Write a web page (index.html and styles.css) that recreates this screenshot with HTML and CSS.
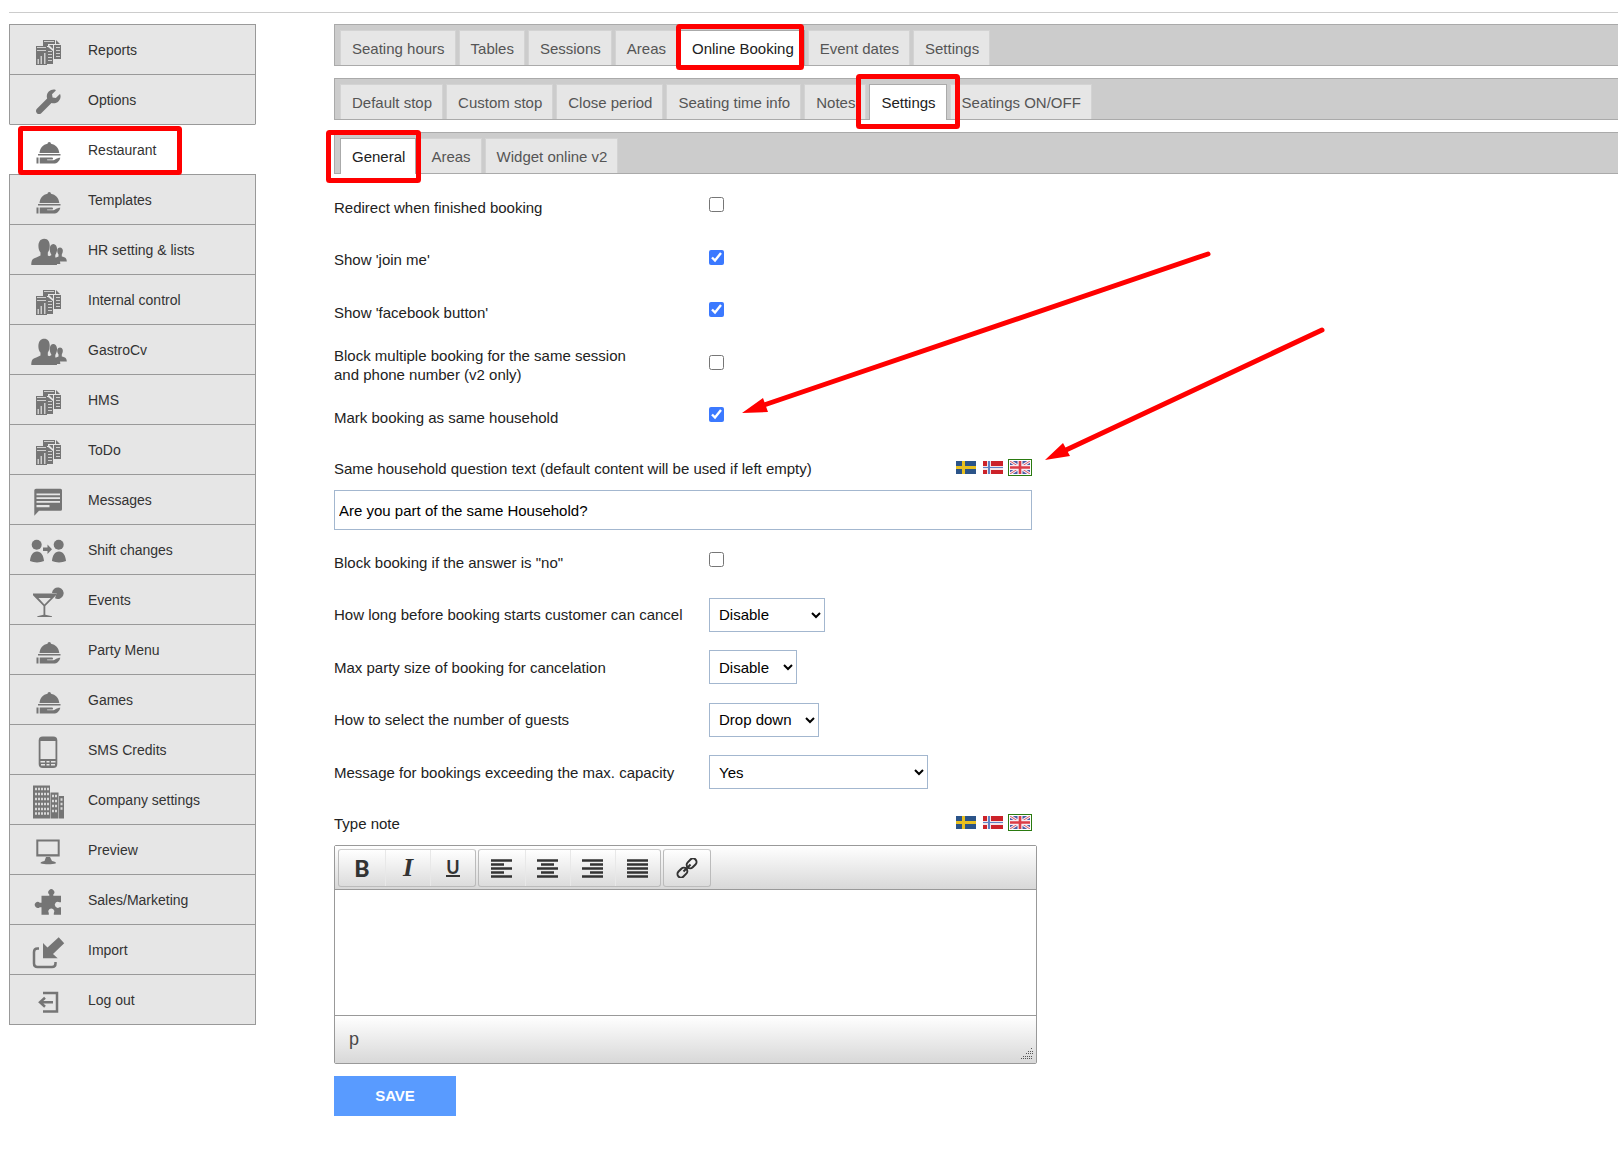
FILE: index.html
```
<!DOCTYPE html>
<html lang="en">
<head>
    <meta charset="utf-8">
    <title>Online Booking - Settings</title>
    <link rel="stylesheet" href="styles.css">
</head>
<body>
    <svg class="sprite" aria-hidden="true">
        <symbol id="i-reports" viewBox="0 0 40 41">
            <path d="M15 10h12v4h-7v2h-5z"/>
            <path class="cut soft" d="M16 11h10v1H16z"/>
            <path d="M28 10l4 4h-4zM26 15h7v14h-7z"/>
            <path class="cut soft" d="M28 17h4v1h-4zM28 20h4v1h-4zM28 23h4v1h-4zM28 26h4v1h-4z"/>
            <path d="M19 17h1l5 4v13h-6z"/>
            <path d="M21 15l4 4v-4z"/>
            <path class="cut soft" d="M20 21h4v1h-4zM20 24h4v1h-4zM20 27h4v1h-4zM20 30h4v1h-4z"/>
            <path d="M8 16h11v19H8z"/>
            <path class="cut soft" d="M9 17h9v1H9zM9 20h9v1H9zM9.500 29h1.500v5H9.500zM12.500 26h1.500v8h-1.500zM16 23h1.500v11H16z"/>
        </symbol>
        <symbol id="i-options" viewBox="0 0 40 41">
            <path transform="translate(8 9.500) scale(.048)" d="M507.730 109.100c-2.240-9.030-13.540-12.090-20.120-5.510l-74.360 74.360-67.880-11.310-11.310-67.880 74.360-74.360c6.620-6.620 3.430-17.900-5.660-20.160-47.380-11.740-99.550.910-136.580 37.930-39.640 39.640-50.550 97.100-34.050 147.200L18.740 402.760c-25 25-25 65.500 0 90.500s65.500 25 90.500 0l213.210-213.210c50.120 16.710 107.470 5.680 147.370-34.220 37.070-37.070 49.700-89.320 37.910-136.730z"/>
        </symbol>
        <symbol id="i-dish" viewBox="0 0 40 41">
            <path d="M11.500 23c.5-5 3.500-8.500 8-9.300a1.600 1.600 0 0 1 3.500 0c4.500.8 7.800 4.300 8.300 9.300zM10 24h22.500v1.500H10zM8.500 27.500h2v6h-2zM11.700 27.500H24c1 0 1.500 1.500.5 2h-5.500l.3.800h5c3 0 4-2.600 8-2.600-.8 3.500-3.300 5.800-6.500 5.800H11.700z"/>
        </symbol>
        <symbol id="i-people" viewBox="0 0 40 41">
            <path d="M27 31.500V28l3.500-1.500v-2c-2.500-4-1-7 1.500-7s4 3 1.800 7v2c3.500.8 5 1.800 5 5z"/>
            <path d="M20 34v-7l3.500-2c-3-5-2-11 1.800-11s5.200 6 2 11v2.500c3.500 1 5 2.500 5 6.500z"/>
            <path d="M3.300 35c0-5 1.200-6.300 5-7.500l4.200-2v-3c-3-3-3.500-13.800 3.700-13.800s6.200 10.800 3.600 13.800v3l4.200 2c4 1.200 5 2.500 5 7.500z"/>
        </symbol>
        <symbol id="i-message" viewBox="0 0 40 41">
            <path d="M8 8.700h24.500q1.500 0 1.500 1.500v19q0 1.500-1.500 1.500H11l-4.700 5V10.200q0-1.500 1.700-1.500z"/>
            <path class="cut" d="M8.500 13.500H32v1.700H8.500zM8.500 17.200H32v1.700H8.500zM8.500 21H32v1.700H8.500zM8.500 25h13v2.200h-13z"/>
        </symbol>
        <symbol id="i-shift" viewBox="0 0 40 41">
            <circle cx="8.700" cy="14.700" r="5"/>
            <circle cx="30.700" cy="14.700" r="5"/>
            <path d="M2 31c.5-5.500 2.800-9.500 7-9.500s6.500 4 7 9.500c-4 1.900-10 1.900-14 0zM24 31c.5-5.500 2.800-9.500 7-9.500s6.500 4 7 9.500c-4 1.900-10 1.900-14 0zM15 17.500h4.500v-3l4.500 4.800-4.500 4.700v-3H15z"/>
        </symbol>
        <symbol id="i-events" viewBox="0 0 40 41">
            <path d="M24 13a5.800 5.800 0 1 1 3 5.300l1.500-5z"/>
            <path d="M5 13.500h23v1.800L17.300 26v8.800l6.700 1.400V37H9.300v-.8l6.200-1.400V26L5 15.300z"/>
            <path class="cut" d="M10.500 18h12.300l-6.400 6.500z"/>
        </symbol>
        <symbol id="i-phone" viewBox="0 0 40 41">
            <rect x="10.700" y="6.500" width="18.600" height="31.500" rx="4"/>
            <path class="cut" d="M12.500 11h15v18h-15zM12.500 31H17v1.500h-4.500zM18.500 31h3v1.500h-3zM23 31h4.500v1.500H23zM13 34h4v1.500h-4zM18.500 34h3v1.500h-3zM23 34h4v1.500h-4z"/>
        </symbol>
        <symbol id="i-company" viewBox="0 0 40 41">
            <path d="M5 5.500h17v33H5zM22.500 12.500h8v26h-8zM31 16h5v22.500h-5z"/>
            <path class="dots" d="M7 9h14M7 14h14M7 19h14M7 24h14M7 29h14M7 33.500h14M24 16h5M24 21h5M24 26h5M24 31h5M32.500 19.500h2M32.500 24h2M32.500 28.500h2"/>
        </symbol>
        <symbol id="i-preview" viewBox="0 0 40 41">
            <path d="M8.300 9.500h23.400V26.500H8.300zM18 27h4l2 4c3 .6 4 1.200 4 2.200-4 1.400-11.500 1.400-15.500 0 0-1 1-1.600 4-2.200z"/>
            <path class="cut" d="M10.300 11.500h19.400v12.700H10.300z"/>
        </symbol>
        <symbol id="i-puzzle" viewBox="0 0 40 41">
            <path d="M13.500 15.700h7.800v-1.200a3 3 0 1 1 4 0v1.200H33v6.600h-1.500a3 3 0 1 0 0 5H33v7.400h-7.200v-1.500a3 3 0 1 0-5 0v1.500h-7.300v-7.500h-1.700a3 3 0 1 1 0-4.500h1.700z"/>
        </symbol>
        <symbol id="i-import" viewBox="0 0 40 41">
            <path d="M15 13l4.500 4.500L30.700 7.300l5.500 6L25 24l4.700 4.300H15z"/>
            <path class="line" d="M11 18.500H9.500q-3.500 0-3.500 3.500v11.500q0 3.500 3.500 3.500H24q3.500 0 3.500-3.500V32"/>
        </symbol>
        <symbol id="i-logout" viewBox="0 0 40 41">
            <path class="line" d="M15 13h14v18.500H15M25 22.300H12M17 17.800l-5 4.500 5 4.500"/>
        </symbol>
        <symbol id="flag-se" viewBox="0 0 20 13">
            <path fill="#2b5488" d="M0 0h20v13H0z"/>
            <path fill="#e8c020" d="M6 0h3v13H6zM0 5h20v3H0z"/>
        </symbol>
        <symbol id="flag-no" viewBox="0 0 20 13">
            <path fill="#cc2229" d="M0 0h20v13H0z"/>
            <path fill="#f3e6ea" d="M4 0h4v13H4zM0 5h20v4H0z"/>
            <path fill="#5f83c4" d="M5 0h2v13H5zM0 6h20v1H0z"/>
        </symbol>
        <symbol id="flag-gb" viewBox="0 0 20 13">
            <path fill="#4a5ca5" d="M0 0h20v13H0z"/>
            <path stroke="#f4eef4" stroke-width="3" d="M0 0l20 13M20 0L0 13"/>
            <path stroke="#dc5a66" stroke-width="1" d="M0 0l20 13M20 0L0 13"/>
            <path fill="#f4eef4" d="M7.500 0h5v13h-5zM0 4h20v5H0z"/>
            <path fill="#dc3c46" d="M8.700 0h2.600v13H8.700zM0 5.300h20v2.400H0z"/>
        </symbol>
    </svg>

    <div class="page">
        <nav class="sidebar">
            <a href="#"><svg><use href="#i-reports"/></svg>Reports</a>
            <a href="#"><svg><use href="#i-options"/></svg>Options</a>
            <a href="#" class="current"><svg><use href="#i-dish"/></svg>Restaurant</a>
            <a href="#"><svg><use href="#i-dish"/></svg>Templates</a>
            <a href="#"><svg><use href="#i-people"/></svg>HR setting &amp; lists</a>
            <a href="#"><svg><use href="#i-reports"/></svg>Internal control</a>
            <a href="#"><svg><use href="#i-people"/></svg>GastroCv</a>
            <a href="#"><svg><use href="#i-reports"/></svg>HMS</a>
            <a href="#"><svg><use href="#i-reports"/></svg>ToDo</a>
            <a href="#"><svg><use href="#i-message"/></svg>Messages</a>
            <a href="#"><svg><use href="#i-shift"/></svg>Shift changes</a>
            <a href="#"><svg><use href="#i-events"/></svg>Events</a>
            <a href="#"><svg><use href="#i-dish"/></svg>Party Menu</a>
            <a href="#"><svg><use href="#i-dish"/></svg>Games</a>
            <a href="#"><svg><use href="#i-phone"/></svg>SMS Credits</a>
            <a href="#"><svg><use href="#i-company"/></svg>Company settings</a>
            <a href="#"><svg><use href="#i-preview"/></svg>Preview</a>
            <a href="#"><svg><use href="#i-puzzle"/></svg>Sales/Marketing</a>
            <a href="#"><svg><use href="#i-import"/></svg>Import</a>
            <a href="#"><svg><use href="#i-logout"/></svg>Log out</a>
        </nav>

        <main class="main">
            <div class="tab-bars">
                <nav class="tabs">
                    <a href="#">Seating hours</a>
                    <a href="#">Tables</a>
                    <a href="#">Sessions</a>
                    <a href="#">Areas</a>
                    <a href="#" class="active">Online Booking</a>
                    <a href="#">Event dates</a>
                    <a href="#">Settings</a>
                </nav>
                <nav class="tabs">
                    <a href="#">Default stop</a>
                    <a href="#">Custom stop</a>
                    <a href="#">Close period</a>
                    <a href="#">Seating time info</a>
                    <a href="#">Notes</a>
                    <a href="#" class="active">Settings</a>
                    <a href="#">Seatings ON/OFF</a>
                </nav>
                <nav class="tabs">
                    <a href="#" class="active">General</a>
                    <a href="#">Areas</a>
                    <a href="#">Widget online v2</a>
                </nav>
            </div>

            <form class="settings">
                <div class="rows">
                    <div class="row">
                        <label for="redirect">Redirect when finished booking</label>
                        <input type="checkbox" id="redirect">
                    </div>
                    <div class="row">
                        <label for="join">Show 'join me'</label>
                        <input type="checkbox" id="join" checked>
                    </div>
                    <div class="row">
                        <label for="facebook">Show 'facebook button'</label>
                        <input type="checkbox" id="facebook" checked>
                    </div>
                    <div class="row">
                        <label for="multiple">Block multiple booking for the same session<br>and phone number (v2 only)</label>
                        <input type="checkbox" id="multiple">
                    </div>
                    <div class="row">
                        <label for="household">Mark booking as same household</label>
                        <input type="checkbox" id="household" checked>
                    </div>
                </div>

                <div class="lang-row">
                    <label for="question">Same household question text (default content will be used if left empty)</label>
                    <div class="flags">
                        <button type="button" aria-label="Swedish"><svg><use href="#flag-se"/></svg></button>
                        <button type="button" aria-label="Norwegian"><svg><use href="#flag-no"/></svg></button>
                        <button type="button" class="selected" aria-label="English"><svg><use href="#flag-gb"/></svg></button>
                    </div>
                </div>
                <input type="text" class="question" id="question" value="Are you part of the same Household?">

                <div class="rows second">
                    <div class="row">
                        <label for="block">Block booking if the answer is "no"</label>
                        <input type="checkbox" id="block">
                    </div>
                    <div class="row">
                        <label for="cancel">How long before booking starts customer can cancel</label>
                        <select id="cancel" class="w-time"><option>Disable</option></select>
                    </div>
                    <div class="row">
                        <label for="party">Max party size of booking for cancelation</label>
                        <select id="party" class="w-size"><option>Disable</option></select>
                    </div>
                    <div class="row">
                        <label for="guests">How to select the number of guests</label>
                        <select id="guests" class="w-guests"><option>Drop down</option></select>
                    </div>
                    <div class="row">
                        <label for="capacity">Message for bookings exceeding the max. capacity</label>
                        <select id="capacity" class="w-message"><option>Yes</option></select>
                    </div>
                </div>

                <div class="lang-row">
                    <label for="note">Type note</label>
                    <div class="flags">
                        <button type="button" aria-label="Swedish"><svg><use href="#flag-se"/></svg></button>
                        <button type="button" aria-label="Norwegian"><svg><use href="#flag-no"/></svg></button>
                        <button type="button" class="selected" aria-label="English"><svg><use href="#flag-gb"/></svg></button>
                    </div>
                </div>
                <div class="editor">
                    <div class="toolbar">
                        <div class="tools">
                            <button type="button" class="bold">B</button>
                            <button type="button" class="italic">I</button>
                            <button type="button" class="underline"><span>U</span></button>
                        </div>
                        <div class="tools">
                            <button type="button" aria-label="Align left"><svg viewBox="0 0 22 19"><path d="M0 1.500h21M0 5.500h13M0 9.500h21M0 13.500h13M0 17.500h21"/></svg></button>
                            <button type="button" aria-label="Center"><svg viewBox="0 0 22 19"><path d="M0 1.500h21M4 5.500h13M0 9.500h21M4 13.500h13M0 17.500h21"/></svg></button>
                            <button type="button" aria-label="Align right"><svg viewBox="0 0 22 19"><path d="M0 1.500h21M8 5.500h13M0 9.500h21M8 13.500h13M0 17.500h21"/></svg></button>
                            <button type="button" aria-label="Justify"><svg viewBox="0 0 22 19"><path d="M0 1.500h21M0 5.500h21M0 9.500h21M0 13.500h21M0 17.500h21"/></svg></button>
                        </div>
                        <div class="tools">
                            <button type="button" aria-label="Link"><svg class="link" viewBox="0 0 22 20"><g transform="rotate(-45 11 10)"><rect x="-1" y="6.500" width="11" height="7" rx="3.500"/><rect x="12" y="6.500" width="11" height="7" rx="3.500"/><path d="M6 10h10"/></g></svg></button>
                        </div>
                    </div>
                    <textarea id="note"></textarea>
                    <div class="status">
                        <span>p</span>
                        <svg viewBox="0 0 13 13"><path d="M11 1.500h2M8 4.500h5M6 6.500h7M3 9.500h10M1 11.500h12"/></svg>
                    </div>
                </div>
                <button type="submit" class="save">SAVE</button>
            </form>
        </main>
    </div>

    <!-- help marks over the page -->
    <svg class="marks" aria-hidden="true">
        <rect x="20.500" y="128.500" width="159" height="44" rx="1"/>
        <rect x="678.500" y="26.500" width="123" height="41" rx="1"/>
        <rect x="858.500" y="76.500" width="99" height="50" rx="1"/>
        <rect x="328.500" y="132.500" width="90" height="48" rx="1"/>
        <path d="M1208 254L764 405M1322 330L1066 450"/>
        <path class="head" d="M742 413l21-15 5 14zM1045 460l18-17 7 13z"/>
    </svg>
</body>
</html>
```
FILE: styles.css
```
* {
    box-sizing: border-box;
}
body {
    margin: 0;
    background: #fff;
    color: #222;
    font-family: "Liberation Sans", Arial, sans-serif;
    font-size: 15px;
}
a {
    text-decoration: none;
}
.sprite {
    display: none;
}
.page {
    display: flex;
    align-items: flex-start;
    gap: 78px;
    margin: 12px 0 0 9px;
    padding-top: 11px;
    border-top: 1px solid #ccc;
}

/* left menu */
.sidebar {
    flex: 0 0 247px;
    border-bottom: 1px solid #999;
}
.sidebar a {
    display: flex;
    align-items: center;
    gap: 20px;
    height: 50px;
    padding-left: 18px;
    border: 1px solid #999;
    border-bottom: 0;
    background: #e6e6e6;
    color: #333;
    font-size: 14px;
}
.sidebar a.current {
    background: #fff;
    border-left-color: #fff;
    border-right-color: #fff;
}
.sidebar svg {
    width: 40px;
    height: 41px;
    margin-top: 2px;
    fill: #757575;
    color: #e6e6e6;
}
.sidebar .current svg {
    color: #fff;
}
.cut {
    fill: currentColor;
}
.soft {
    opacity: .8;
}
.dots {
    fill: none;
    stroke: #d8d8d8;
    stroke-width: 2.5;
    stroke-dasharray: 2 1;
}
.line {
    fill: none;
    stroke: #757575;
    stroke-width: 2.5;
}

/* tabs */
.main {
    flex: 1;
    min-width: 0;
}
.tab-bars {
    display: flex;
    flex-direction: column;
    gap: 12px;
}
.tabs {
    display: flex;
    gap: 3px;
    height: 42px;
    padding: 5px 0 0 5px;
    border: 1px solid #aaa;
    border-right: 0;
    background: #ccc;
}
.tabs a {
    display: flex;
    align-items: center;
    padding: 0 10px 0 11px;
    border: 1px solid #d3d3d3;
    border-bottom: 0;
    background: #e6e6e6;
    color: #555;
    white-space: nowrap;
}
.tabs a.active {
    margin-bottom: -1px;
    padding-bottom: 1px;
    border-color: #aaa;
    background: #fff;
    color: #212121;
}

/* form */
.settings {
    max-width: 703px;
    padding-top: 7px;
}
.row {
    display: flex;
    align-items: center;
    height: 52px;
}
.row:nth-child(even) {
    height: 53px;
}
.row label {
    flex: 0 0 375px;
    line-height: 19px;
}
.rows.second {
    margin-top: 6px;
}
input[type="checkbox"] {
    width: 15px;
    height: 15px;
    margin: 0 0 5px;
    accent-color: #3b79ff;
}
.lang-row {
    display: flex;
    justify-content: space-between;
    align-items: center;
    height: 47px;
    padding-top: 2px;
    margin-right: 5px;
}
.lang-row label {
    padding-top: 2px;
}
.flags {
    display: flex;
    gap: 3px;
}
.flags button {
    display: flex;
    padding: 1px;
    border: 1px solid transparent;
    background: none;
}
.flags button.selected {
    border-color: #2a7a10;
}
.flags svg {
    width: 20px;
    height: 13px;
}
.question {
    display: block;
    width: calc(100% - 5px);
    height: 40px;
    padding: 0 4px;
    border: 1px solid #a3b7cf;
    color: #000;
    font: inherit;
}
select {
    height: 34px;
    padding: 0 1px 0 5px;
    border: 1px solid #a3b7cf;
    border-radius: 0;
    background: #fff;
    color: #000;
    font: inherit;
}
.w-time {
    width: 116px;
}
.w-size {
    width: 88px;
}
.w-guests {
    width: 110px;
}
.w-message {
    width: 219px;
}

/* editor */
.editor {
    border: 1px solid #999;
    border-radius: 2px;
}
.toolbar {
    display: flex;
    gap: 2px;
    height: 44px;
    padding: 3px;
    border-bottom: 1px solid #999;
    background: linear-gradient(#fff, #d8d8d8);
}
.tools {
    display: flex;
    height: 38px;
    border: 1px solid #bbb;
    border-top-color: #ccc;
    border-radius: 3px;
    background: linear-gradient(#fff, #dcdcdc);
}
.tools button {
    display: flex;
    justify-content: center;
    align-items: center;
    width: 46px;
    padding: 0;
    border: 0;
    background: none;
    color: #333;
}
.tools button + button {
    width: 45px;
    border-left: 1px solid #e8e8e8;
}
.tools .bold {
    font: 900 23px Lato, sans-serif;
}
.tools .italic {
    font: italic bold 26px "Liberation Serif", serif;
}
.tools .underline {
    font: bold 18px Lato, sans-serif;
}
.underline span {
    border-bottom: 2px solid #333;
    line-height: 16px;
}
.tools svg {
    width: 22px;
    height: 19px;
    fill: none;
    stroke: #333;
    stroke-width: 2.5;
}
.tools .link {
    height: 20px;
    stroke-width: 2;
}
.editor textarea {
    display: block;
    width: 100%;
    height: 125px;
    border: 0;
    resize: none;
    outline: 0;
}
.status {
    display: flex;
    justify-content: space-between;
    align-items: center;
    height: 48px;
    padding: 0 3px 0 14px;
    border-top: 1px solid #999;
    background: linear-gradient(#fff, #d8d8d8);
    color: #484848;
    font-size: 18px;
}
.status svg {
    align-self: flex-end;
    width: 13px;
    height: 13px;
    margin-bottom: 3px;
    stroke: #555;
    stroke-dasharray: 1 1;
}
.save {
    display: block;
    width: 122px;
    height: 40px;
    margin-top: 12px;
    padding: 0 0 2px;
    border: 0;
    background: #599bff;
    color: #fff;
    font: bold 15px "Liberation Sans", Arial, sans-serif;
}

.marks {
    position: absolute;
    top: 0;
    left: 0;
    width: 1330px;
    height: 480px;
    pointer-events: none;
    fill: none;
    stroke: #f00;
    stroke-width: 5;
    stroke-linecap: round;
}
.marks .head {
    fill: #f00;
    stroke: none;
}
```
